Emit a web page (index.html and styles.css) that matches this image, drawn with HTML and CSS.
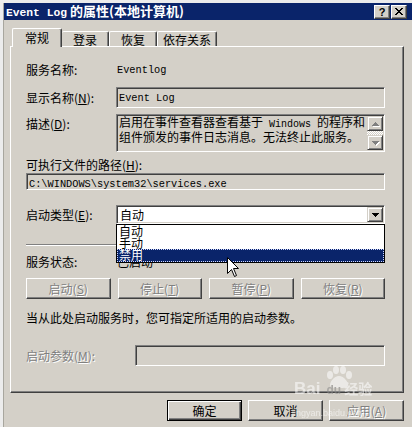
FILE: index.html
```html
<!DOCTYPE html>
<html>
<head>
<meta charset="utf-8">
<link rel="stylesheet" href="styles.css">
</head>
<body>
<div class="window">
  <div class="titlebar">
    <div class="title"><span class="tlat">Event Log</span> 的属性(本地计算机)</div>
    <div class="tbtns">
      <div class="tbtn q">?</div>
      <div class="tbtn"><svg width="8" height="7" viewBox="0 0 8 7"><path d="M0 0h2v1H0zM6 0h2v1H6zM1 1h2v1H1zM5 1h2v1H5zM2 2h4v1H2zM3 3h2v1H3zM2 4h4v1H2zM1 5h2v1H1zM5 5h2v1H5zM0 6h2v1H0zM6 6h2v1H6z" fill="#000"/></svg></div>
    </div>
  </div>
  <div class="content">
    <div class="tabs">
      <div class="tab sel">常规</div>
      <div class="tab t2">登录</div>
      <div class="tab t3">恢复</div>
      <div class="tab t4">依存关系</div>
    </div>
    <div class="panel">
      <div class="row r1"><div class="lbl">服务名称:</div><div class="val mono">Eventlog</div></div>
      <div class="row r2"><div class="lbl">显示名称(<u>N</u>):</div><div class="field sunken tb"><span class="mono">Event Log</span></div></div>
      <div class="row r3"><div class="lbl lbltop">描述(<u>D</u>):</div>
        <div class="field sunken desc">
          <div class="desctext">启用在事件查看器查看基于<span class="mono"> Windows </span>的程序和<br>组件颁发的事件日志消息。无法终止此服务。</div>
          <div class="vscroll">
            <div class="sbtn"><svg width="7" height="4" viewBox="0 0 7 4"><path d="M3 0h1v1h1v1h1v1h1v1H0V3h1V2h1V1h1z" fill="#808080"/></svg></div>
            <div class="track"></div>
            <div class="sbtn"><svg width="7" height="4" viewBox="0 0 7 4"><path d="M0 0h7v1H6v1H5v1H4v1H3V3H2V2H1V1H0z" fill="#808080"/></svg></div>
          </div>
        </div>
      </div>
      <div class="lblline r4">可执行文件的路径(<u>H</u>):</div>
      <div class="field sunken path"><span class="mono">C:\WINDOWS\system32\services.exe</span></div>
      <div class="row r6"><div class="lbl">启动类型(<u>E</u>):</div>
        <div class="combo-wrap">
          <div class="combo sunken"><span class="ctext">自动</span>
            <div class="cbtn"><svg width="7" height="4" viewBox="0 0 7 4"><path d="M0 0h7v1H6v1H5v1H4v1H3V3H2V2H1V1H0z" fill="#000"/></svg></div>
          </div>
          <div class="list">
            <div class="item">自动</div>
            <div class="item">手动</div>
            <div class="item hl">禁用</div>
          </div>
        </div>
      </div>
      <div class="sep"></div>
      <div class="row r7"><div class="lbl">服务状态:</div><div class="val">已启动</div></div>
      <div class="btnrow">
        <div class="btn dis">启动(<u>S</u>)</div>
        <div class="btn dis">停止(<u>T</u>)</div>
        <div class="btn dis">暂停(<u>P</u>)</div>
        <div class="btn dis">恢复(<u>R</u>)</div>
      </div>
      <div class="note">当从此处启动服务时，您可指定所适用的启动参数。</div>
      <div class="row r9"><div class="lbl wide dis">启动参数(<u>M</u>):</div><div class="field sunken tb"></div></div>
    </div>
    <div class="footer">
      <div class="btn fbtn def">确定</div>
      <div class="btn fbtn">取消</div>
      <div class="btn fbtn dis">应用(<u>A</u>)</div>
    </div>
  </div>
</div>
<div class="watermark">
  <svg class="paw" width="30" height="22" viewBox="0 0 30 22"><ellipse cx="6" cy="9" rx="3" ry="4" fill="#fff"/><ellipse cx="12" cy="4" rx="3" ry="4" fill="#fff"/><ellipse cx="19" cy="4" rx="3" ry="4" fill="#fff"/><ellipse cx="25" cy="9" rx="3" ry="4" fill="#fff"/><path d="M15 10c5 0 9 6 9 9s-4 3-9 3-9 0-9-3 4-9 9-9z" fill="#fff"/></svg>
  <div class="wm1"><span class="bai">Bai</span><span class="du">du</span><span class="jy">经验</span></div>
  <div class="wm2">jingyan.baidu.com</div>
</div>
<svg class="cursor" width="13" height="20" viewBox="0 0 13 20"><path d="M0.5 0.5V16.5L4.5 12.5L7.5 19.5L9.5 18.5L6.5 11.5H11.5Z" fill="#fff" stroke="#000" stroke-width="1"/></svg>
</body>
</html>
```
FILE: styles.css
```css
* { box-sizing: border-box; margin: 0; padding: 0; }
html, body { width: 412px; height: 427px; overflow: hidden; }
body {
  background: #ececec;
  font-family: "Noto Sans CJK SC", sans-serif;
  font-size: 12px;
  line-height: 14px;
  color: #000;
  padding: 3px 0 0 3px;
}
u { text-decoration: underline; }
.mono { font-family: "Liberation Mono", "DejaVu Sans Mono", monospace; font-size: 10.3px; }

.window {
  background: #d4d0c8;
  border-left: 1px solid #a8a69e;
  height: 424px;
}
.titlebar {
  height: 17px;
  background: #0a246a;
  color: #fff;
  display: flex;
  align-items: center;
  justify-content: space-between;
  padding: 0 5px 0 2px;
}
.title { font-weight: bold; font-size: 13px; line-height: 15px; white-space: nowrap; }
.tlat { font-family: "Liberation Mono", monospace; font-size: 11.3px; font-weight: bold; }
.tbtns { display: flex; gap: 1px; }
.tbtn {
  width: 16px; height: 14px;
  background: #d4d0c8;
  border: 1px solid; border-color: #fff #404040 #404040 #fff;
  box-shadow: inset -1px -1px #808080;
  display: flex; align-items: center; justify-content: center;
  color: #000;
}
.tbtn.q { font-family: "Liberation Sans", sans-serif; font-weight: bold; font-size: 11px; line-height: 12px; }

.content { padding-left: 6px; }
.tabs { display: flex; align-items: flex-end; height: 26px; padding-left: 2px; }
.tab {
  height: 15px;
  background: #d4d0c8;
  border-top: 1px solid #fff;
  border-left: 1px solid #fff;
  border-right: 1px solid #404040;
  box-shadow: inset -1px 0 #808080;
  border-radius: 2px 2px 0 0;
  display: flex; align-items: center; justify-content: center;
  line-height: 14px;
  padding-top: 1px;
}
.tab.sel { width: 50px; height: 19px; margin-bottom: -1px; position: relative; z-index: 2; padding-top: 0; }
.tab.t2 { width: 47px; border-left: none; }
.tab.t3 { width: 48px; }
.tab.t4 { width: 60px; }

.panel {
  width: 394px; height: 347px;
  border-top: 1px solid #fff;
  border-left: 1px solid #fff;
  border-right: 1px solid #404040;
  border-bottom: 1px solid #404040;
  box-shadow: inset -1px -1px #808080;
  padding: 0 18px 0 15px;
}
.row { display: flex; align-items: center; }
.lbl { width: 90px; flex: none; white-space: nowrap; }
.lbl.wide { width: 109px; }
.val { white-space: nowrap; padding-left: 1px; }
.r1 { margin-top: 14px; height: 18px; }
.r2 { margin-top: 8px; height: 21px; }
.r3 { margin-top: 6px; height: 38px; align-items: flex-start; }
.lbltop { padding-top: 3px; }
.r4 { margin-top: 6px; height: 14px; }
.lblline { white-space: nowrap; }
.r6 { margin-top: 15px; height: 19px; }
.r7 { margin-top: 9px; height: 14px; }
.r9 { margin-top: 20px; height: 21px; }

.sunken {
  border: 1px solid; border-color: #808080 #fff #fff #808080;
  box-shadow: inset 1px 1px #404040, inset -1px -1px #d4d0c8;
}
.field { flex: 1; background: #d4d0c8; }
.tb { height: 21px; padding: 2px 0 0 2px; line-height: 12px; }
.desc { height: 38px; display: flex; padding: 1px 1px 1px 1px; }
.desctext { flex: 1; padding: 0 0 0 1px; line-height: 11.5px; white-space: nowrap; }
.desctext .mono { font-size: 10px; }
.vscroll { width: 16px; display: flex; flex-direction: column; }
.sbtn {
  height: 15px; background: #d4d0c8;
  border: 1px solid; border-color: #d4d0c8 #404040 #404040 #d4d0c8;
  box-shadow: inset 1px 1px #fff, inset -1px -1px #808080;
  display: flex; align-items: center; justify-content: center;
}
.sbtn svg { filter: drop-shadow(1px 1px 0 #fff); }
.track { flex: 1; background: repeating-conic-gradient(#fff 0 25%, #d4d0c8 0 50%) 0 0 / 2px 2px; }
.path { margin-top: 1px; height: 17px; padding: 2px 0 0 2px; line-height: 12px; white-space: nowrap; }

.combo-wrap { flex: 1; position: relative; height: 19px; }
.combo {
  height: 19px; background: #fff;
  display: flex; align-items: center; justify-content: space-between;
  padding: 0 1px 0 3px;
}
.ctext { line-height: 14px; }
.cbtn {
  width: 16px; height: 15px; background: #d4d0c8;
  border: 1px solid; border-color: #d4d0c8 #404040 #404040 #d4d0c8;
  box-shadow: inset 1px 1px #fff, inset -1px -1px #808080;
  display: flex; align-items: center; justify-content: center;
}
.list {
  position: absolute; left: 0; right: 0; top: 19px;
  background: #fff; border: 1px solid #000;
  z-index: 5;
}
.item { height: 12px; line-height: 12px; padding-left: 2px; }
.item.hl { height: 13px; background: #0a246a; color: #fff; outline: 1px dotted #d0d8ff; outline-offset: -1px; }

.sep { margin-top: 20px; height: 2px; border-top: 1px solid #808080; border-bottom: 1px solid #fff; }

.btn {
  background: #d4d0c8;
  border: 1px solid; border-color: #fff #404040 #404040 #fff;
  box-shadow: inset -1px -1px #808080;
  display: flex; align-items: center; justify-content: center;
  white-space: nowrap;
}
.dis { color: #808080; text-shadow: 1px 1px 0 #fff; }
.btnrow { margin-top: 9px; height: 21px; display: grid; grid-template-columns: repeat(4, 1fr); column-gap: 7px; }
.note { margin-top: 12px; height: 14px; white-space: nowrap; }

.footer { width: 394px; display: flex; justify-content: flex-end; gap: 6px; margin-top: 7px; }
.fbtn { width: 75px; height: 21px; }
.fbtn.def { border: 1px solid #000; box-shadow: inset 1px 1px #fff, inset -1px -1px #404040, inset -2px -2px #808080; }

.watermark { position: absolute; left: 292px; top: 366px; width: 100px; height: 52px; opacity: 0.55; color: #fff; pointer-events: none; }
.paw { position: absolute; left: 32px; top: 0; }
.wm1 { position: absolute; left: 2px; top: 15px; white-space: nowrap; font-family: "Liberation Sans", sans-serif; font-weight: bold; }
.bai { font-size: 17px; }
.du { font-size: 12px; color: #888; margin-left: 6px; }
.jy { font-size: 14px; margin-left: 3px; font-family: "Noto Sans CJK SC", sans-serif; }
.wm2 { position: absolute; left: 0; top: 40px; font-family: "Liberation Sans", sans-serif; font-size: 9px; white-space: nowrap; }
.cursor { position: absolute; left: 227px; top: 257px; z-index: 10; }
```
